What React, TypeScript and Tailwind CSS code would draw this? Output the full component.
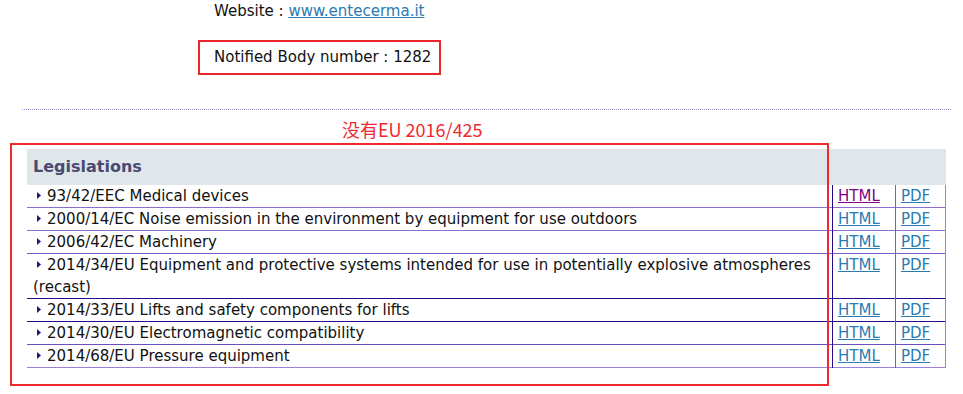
const rows = [
  { code: "93/42/EEC", title: "Medical devices", visited: true, line: "border-[#8a6fd0]" },
  { code: "2000/14/EC", title: "Noise emission in the environment by equipment for use outdoors", line: "border-[#8a6fd0]" },
  { code: "2006/42/EC", title: "Machinery", line: "border-[#7a5cc8]" },
  {
    code: "2014/34/EU",
    title: "Equipment and protective systems intended for use in potentially explosive atmospheres (recast)",
    line: "border-[#2a0a8c]",
  },
  { code: "2014/33/EU", title: "Lifts and safety components for lifts", line: "border-[#2a0a8c]" },
  { code: "2014/30/EU", title: "Electromagnetic compatibility", line: "border-[#6a4fc0]" },
  { code: "2014/68/EU", title: "Pressure equipment", line: "border-[#9a80d8]" },
];

function Bullet() {
  return (
    <svg width="4" height="7" viewBox="0 0 4 7" className="inline-block ml-[4px] mr-[6px] mb-[2px]">
      <path d="M0 0 L4 3.5 L0 7 Z" fill="#1a1a80" />
    </svg>
  );
}

export default function App() {
  return (
    <div className="w-[963px] h-[394px] bg-white text-[15px] text-[#111] overflow-hidden" style={{ fontFamily: '"DejaVu Sans", Verdana, sans-serif' }}>
      <div className="pl-[214px] pt-px leading-[20px]">
        <div>
          Website :{" "}
          <a href="#" className="text-[#2b7bb0] underline">
            www.entecerma.it
          </a>
        </div>
        <div className="mt-[19px] -ml-[16px] inline-block border-2 border-[#e8262b] pl-[14px] pr-[8px] pt-[5px] pb-[6px]">
          Notified Body number : 1282
        </div>
      </div>

      <div className="mt-[34px] ml-[22px] mr-[12px] border-t border-dotted border-[#9b8fd0]" />

      <div
        className="mt-[8px] ml-[342px] text-[18px] leading-[22px] text-[#ee2a2f]"
        style={{ fontFamily: '"Noto Sans CJK SC", "DejaVu Sans", sans-serif' }}
      >
        没有EU 2016/425
      </div>

      <div className="relative mt-[3px] pt-[6px] pl-[27px]">
        <div className="absolute left-[10px] top-0 w-[819px] h-[243px] border-2 border-[#ee2a2f] pointer-events-none" />
        <table className="w-[919px] border-collapse">
          <thead>
            <tr className="bg-[#dfe7ea]">
              <th colSpan={3} className="h-[36px] pl-[6px] text-left text-[16px] font-bold text-[#4b4a72]">
                Legislations
              </th>
            </tr>
          </thead>
          <tbody>
            {rows.map((r) => (
              <tr key={r.code} className={`border-b ${r.line}`}>
                <td className="w-[806px] align-top leading-[22px] py-0 pl-[6px] pr-[20px]">
                  <Bullet />
                  {r.code} {r.title}
                </td>
                <td className="w-[63px] align-top leading-[22px] border-l border-[#2a0a8c] pl-[5px]">
                  <a href="#" className={`underline ${r.visited ? "text-[#800080]" : "text-[#2b7bb0]"}`}>
                    HTML
                  </a>
                </td>
                <td className="w-[50px] align-top leading-[22px] border-l border-r border-l-[#7a5cc8] border-r-[#9a80d8] pl-[5px]">
                  <a href="#" className="underline text-[#2b7bb0]">
                    PDF
                  </a>
                </td>
              </tr>
            ))}
          </tbody>
        </table>
      </div>
    </div>
  );
}
